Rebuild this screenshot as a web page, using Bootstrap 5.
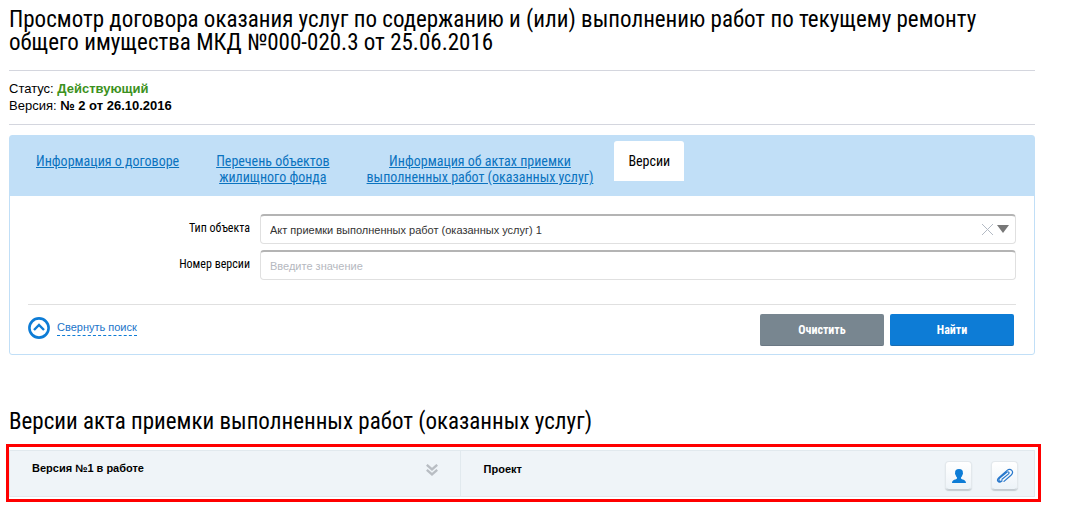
<!DOCTYPE html>
<html lang="ru">
<head>
<meta charset="utf-8">
<meta name="viewport" content="width=device-width, initial-scale=1">
<title>Просмотр договора</title>
<link href="https://cdn.jsdelivr.net/npm/bootstrap@5.3.0/dist/css/bootstrap.min.css" rel="stylesheet">
<style>
  :root { --cond: "Roboto Condensed", Roboto, "Liberation Sans", sans-serif; --brand: #0d7cd6; }
  body { font-family: "Liberation Sans", Arial, sans-serif; font-size: 11px; line-height: 16px; color: #000; background: #fff; }
  .page { padding: 8px 45px 8px 9px; }
  .page-title, .section-title { font-family: var(--cond); font-weight: 400; font-size: 23px; line-height: 23px; margin: 0; }
  .page-title { margin-bottom: 16px; }
  .section-title { margin: 55px 0 11px; }
  .status { border: solid #d4d6de; border-width: 1px 0; padding: 9px 0 10px; font-size: 13px; line-height: 17px; margin-bottom: 10px; }
  .status-on { color: #3c9120; }
  .panel { border: 1px solid #c1dff7; border-radius: 3px; }
  .tabs { background: #c1dff7; height: 60px; padding: 5px 10px 0; font-family: var(--cond); font-size: 14px; line-height: 16px; text-align: center; }
  .tabs .nav-link { color: #0b73bf; padding: 12px 16px; text-decoration: underline; margin-right: 5px; }
  .tabs .nav-link.active { color: #000; background: #fff; text-decoration: none; border-radius: 3px 3px 0 0; padding: 12px 14px; }
  .panel-body { padding: 18px 18px 8px; }
  .field { display: grid; grid-template-columns: 222px 1fr; column-gap: 10px; margin-bottom: 6px; }
  .field label { font-family: var(--cond); font-size: 12px; line-height: 28px; text-align: right; }
  .field .form-control { height: 30px; border: 1px solid #e0e0e0; border-top: 2px solid #b4b4b4; border-radius: 4px; padding: 0 9px; font-size: 11px; line-height: 26px; color: #333; background: #fff; appearance: none; }
  .field .form-control::placeholder { color: #b5b8c0; }
  .combo-icons { right: 7px; top: 0; height: 30px; gap: 3px; }
  .combo-icons button { border: 0; background: none; padding: 0; line-height: 0; }
  .panel-foot { border-top: 1px solid #e0e0e0; margin-top: 24px; padding: 9px 2px 0 0; }
  .collapse-link { color: #1b74c9; text-decoration: none; gap: 7px; height: 28px; }
  .collapse-link span { border-bottom: 1px dashed var(--brand); line-height: 15px; }
  .act { width: 124px; height: 32px; border: 0; border-radius: 2px; padding: 0; font-family: var(--cond); font-weight: 700; font-size: 12px; line-height: 28px; color: #fff; border-bottom: 1px solid #6b7884; }
  .act-clear { background: #788690; }
  .act-find { background: var(--brand); border-bottom-color: #1a6cb0; }
  .act-group { gap: 6px; }
  .marked { border: 3px solid #f00; padding: 3px 3px 2px 0; margin: 0 -6px 0 -3px; }
  .version-row { background: #eff4f8; border: 1px solid #e1e9ee; font-weight: 700; }
  .cell-version { width: 44%; padding: 9px 22px; border-right: 1px solid #e1e9ee; }
  .cell-state { padding: 10px 16px 6px 23px; }
  .tool-group { gap: 19px; }
  .tool { width: 27px; height: 29px; padding: 0; border: 1px solid #e3e8ec; border-bottom-color: #c4cbd1; border-radius: 4px; background: linear-gradient(#fff, #edf3f8); box-shadow: 0 1px 1px #c4cbd1; line-height: 0; }
</style>
</head>
<body>
<main class="page">
  <h1 class="page-title">Просмотр договора оказания услуг по содержанию и (или) выполнению работ по текущему ремонту общего имущества МКД №000-020.3 от 25.06.2016</h1>

  <div class="status">
    <div>Статус: <strong class="status-on">Действующий</strong></div>
    <div>Версия: <strong>№ 2 от 26.10.2016</strong></div>
  </div>

  <section class="panel">
    <nav class="tabs nav align-items-start">
      <a class="nav-link" href="#">Информация о договоре</a>
      <a class="nav-link" href="#">Перечень объектов<br>жилищного фонда</a>
      <a class="nav-link" href="#">Информация об актах приемки<br>выполненных работ (оказанных услуг)</a>
      <a class="nav-link active" href="#" aria-current="page">Версии</a>
    </nav>
    <form class="panel-body">
      <div class="field">
        <label for="type">Тип объекта</label>
        <div class="position-relative">
          <select class="form-control" id="type"><option>Акт приемки выполненных работ (оказанных услуг) 1</option></select>
          <div class="combo-icons position-absolute d-flex align-items-center">
            <button type="button" aria-label="Сбросить"><svg width="13" height="13" viewBox="0 0 13 13"><path d="M1 1l11 11M12 1L1 12" stroke="#b3bac4" fill="none"/></svg></button>
            <svg width="12" height="8" viewBox="0 0 12 8" aria-hidden="true"><path d="M0 0h12L6 8z" fill="#777"/></svg>
          </div>
        </div>
      </div>
      <div class="field">
        <label for="number">Номер версии</label>
        <input class="form-control" id="number" type="text" placeholder="Введите значение">
      </div>
      <div class="panel-foot d-flex justify-content-between">
        <a class="collapse-link d-flex align-items-center" href="#">
          <svg width="22" height="22" viewBox="0 0 22 22" fill="none" stroke="#0d7cd6" aria-hidden="true"><circle cx="11" cy="11" r="9.600" stroke-width="2.600"/><path d="M6 13l5-5 5 5" stroke-width="2.400"/></svg>
          <span>Свернуть поиск</span>
        </a>
        <div class="act-group d-flex">
          <button class="act act-clear" type="reset">Очистить</button>
          <button class="act act-find" type="submit">Найти</button>
        </div>
      </div>
    </form>
  </section>

  <h2 class="section-title">Версии акта приемки выполненных работ (оказанных услуг)</h2>

  <div class="marked">
    <div class="version-row d-flex">
      <div class="cell-version d-flex justify-content-between">
        <span>Версия №1 в работе</span>
        <svg width="12" height="12" viewBox="0 0 12 12" fill="none" stroke="#b8bdc3" stroke-width="2.300" aria-hidden="true" class="mt-1"><path d="M.8 .8L6 5.400 11.200 .8M.8 5.800L6 10.400l5.200-4.600"/></svg>
      </div>
      <div class="cell-state flex-grow-1 d-flex justify-content-between">
        <span>Проект</span>
        <div class="tool-group d-flex">
          <button class="tool" type="button" aria-label="Пользователь"><svg width="16" height="16" viewBox="0 0 16 16"><path d="M8 1C5.200 1 3.900 2.600 4.100 5c-.3.800.1 1.500.5 1.900.3 1 .8 1.900 1.400 2.500v1.200C5.500 11.600 1 11.600 1 15h14c0-3.400-4.500-3.400-5-4.400V9.400c.6-.6 1.100-1.500 1.400-2.500.4-.4.8-1.100.5-1.900C12.100 2.600 10.800 1 8 1z" fill="#0d7cd6"/></svg></button>
          <button class="tool" type="button" aria-label="Вложения"><svg width="18" height="18" viewBox="0 0 18 18" fill="none" stroke="#2878cc" stroke-width="1.200" stroke-linecap="round"><path d="M6 12.300l6.300-5.200c1.600-1.400.1-3.200-1.500-1.900L4 10.800c-2.600 2.300-.2 4.900 2.400 2.700l-.9.900c-2.600 2.200-5.700-.9-2.700-3.800l8-7c3.900-3.200 7.900 1 4.200 4.600l-7 6.200"/></svg></button>
        </div>
      </div>
    </div>
  </div>
</main>
<script src="https://cdn.jsdelivr.net/npm/bootstrap@5.3.0/dist/js/bootstrap.bundle.min.js"></script>
</body>
</html>
